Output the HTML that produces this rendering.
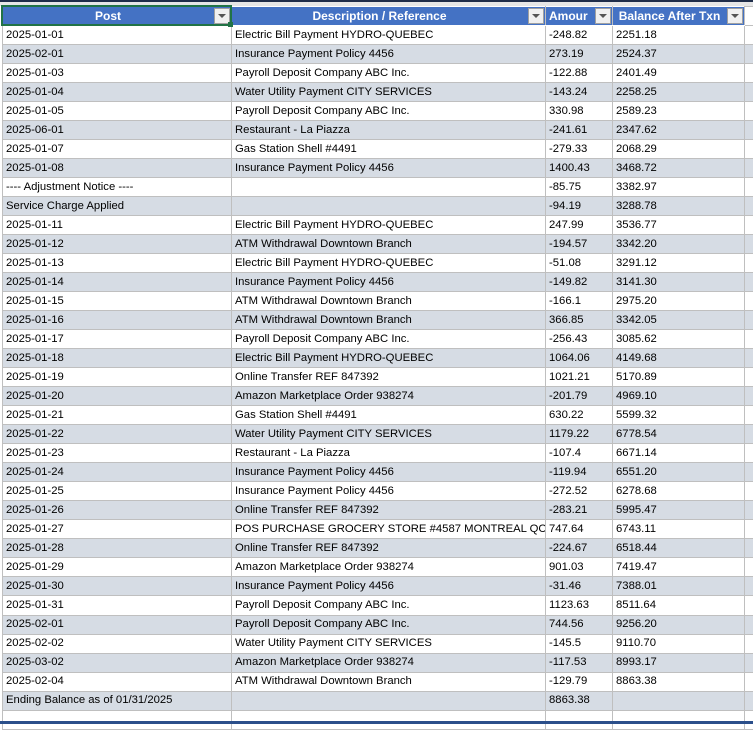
<!DOCTYPE html>
<html><head><style>
*{margin:0;padding:0;box-sizing:border-box}
body{width:753px;height:724px;overflow:hidden;background:#fff;font-family:"Liberation Sans",Arial,sans-serif;font-size:11.3px;position:relative}
.top{position:absolute;left:0;top:0;width:753px;height:6px;background:#e6e6e6;border-top:2px solid #1f2d4a}
table{position:absolute;left:2px;top:6px;border-collapse:collapse;table-layout:fixed;width:761px}
td{height:19.03px;border:1px solid #bfbfbf;padding:0 0 0 3px;white-space:nowrap;overflow:hidden;color:#000;line-height:17px}
tr:nth-child(odd) td{background:#d6dce4}
tr.h td{background:#4472c4;color:#fff;font-weight:bold;font-size:12px;text-align:center;position:relative;border-color:#fff #bfbfbf;padding:0 18px 0 0}
.dd{position:absolute;right:1px;top:1px;width:16px;height:16px;background:#f0f0f0;border:1px solid #a0a0a0}
.dd:after{content:"";position:absolute;left:3px;top:5px;border-left:4px solid transparent;border-right:4px solid transparent;border-top:4px solid #555}
.sel{position:absolute;left:1px;top:5px;width:231px;height:21px;border:2px solid #217346}
.selh{position:absolute;left:228px;top:22px;width:5px;height:5px;background:#217346}
.bot{position:absolute;left:0;top:721px;width:753px;height:3px;background:#2b4f8a}
</style></head><body>
<div class="top"></div>
<table>
<colgroup><col style="width:229px"><col style="width:314px"><col style="width:67px"><col style="width:132px"><col style="width:19px"></colgroup>
<tr class="h"><td>Post<span class="dd"></span></td><td>Description / Reference<span class="dd"></span></td><td style="text-align:left;padding-left:3px">Amour<span class="dd"></span></td><td>Balance After Txn<span class="dd"></span></td><td style="background:#fff;border-color:#bfbfbf"></td></tr>
<tr><td>2025-01-01</td><td>Electric Bill Payment HYDRO-QUEBEC</td><td>-248.82</td><td>2251.18</td><td></td></tr>
<tr><td>2025-02-01</td><td>Insurance Payment Policy 4456</td><td>273.19</td><td>2524.37</td><td></td></tr>
<tr><td>2025-01-03</td><td>Payroll Deposit Company ABC Inc.</td><td>-122.88</td><td>2401.49</td><td></td></tr>
<tr><td>2025-01-04</td><td>Water Utility Payment CITY SERVICES</td><td>-143.24</td><td>2258.25</td><td></td></tr>
<tr><td>2025-01-05</td><td>Payroll Deposit Company ABC Inc.</td><td>330.98</td><td>2589.23</td><td></td></tr>
<tr><td>2025-06-01</td><td>Restaurant - La Piazza</td><td>-241.61</td><td>2347.62</td><td></td></tr>
<tr><td>2025-01-07</td><td>Gas Station Shell #4491</td><td>-279.33</td><td>2068.29</td><td></td></tr>
<tr><td>2025-01-08</td><td>Insurance Payment Policy 4456</td><td>1400.43</td><td>3468.72</td><td></td></tr>
<tr><td>---- Adjustment Notice ----</td><td></td><td>-85.75</td><td>3382.97</td><td></td></tr>
<tr><td>Service Charge Applied</td><td></td><td>-94.19</td><td>3288.78</td><td></td></tr>
<tr><td>2025-01-11</td><td>Electric Bill Payment HYDRO-QUEBEC</td><td>247.99</td><td>3536.77</td><td></td></tr>
<tr><td>2025-01-12</td><td>ATM Withdrawal Downtown Branch</td><td>-194.57</td><td>3342.20</td><td></td></tr>
<tr><td>2025-01-13</td><td>Electric Bill Payment HYDRO-QUEBEC</td><td>-51.08</td><td>3291.12</td><td></td></tr>
<tr><td>2025-01-14</td><td>Insurance Payment Policy 4456</td><td>-149.82</td><td>3141.30</td><td></td></tr>
<tr><td>2025-01-15</td><td>ATM Withdrawal Downtown Branch</td><td>-166.1</td><td>2975.20</td><td></td></tr>
<tr><td>2025-01-16</td><td>ATM Withdrawal Downtown Branch</td><td>366.85</td><td>3342.05</td><td></td></tr>
<tr><td>2025-01-17</td><td>Payroll Deposit Company ABC Inc.</td><td>-256.43</td><td>3085.62</td><td></td></tr>
<tr><td>2025-01-18</td><td>Electric Bill Payment HYDRO-QUEBEC</td><td>1064.06</td><td>4149.68</td><td></td></tr>
<tr><td>2025-01-19</td><td>Online Transfer REF 847392</td><td>1021.21</td><td>5170.89</td><td></td></tr>
<tr><td>2025-01-20</td><td>Amazon Marketplace Order 938274</td><td>-201.79</td><td>4969.10</td><td></td></tr>
<tr><td>2025-01-21</td><td>Gas Station Shell #4491</td><td>630.22</td><td>5599.32</td><td></td></tr>
<tr><td>2025-01-22</td><td>Water Utility Payment CITY SERVICES</td><td>1179.22</td><td>6778.54</td><td></td></tr>
<tr><td>2025-01-23</td><td>Restaurant - La Piazza</td><td>-107.4</td><td>6671.14</td><td></td></tr>
<tr><td>2025-01-24</td><td>Insurance Payment Policy 4456</td><td>-119.94</td><td>6551.20</td><td></td></tr>
<tr><td>2025-01-25</td><td>Insurance Payment Policy 4456</td><td>-272.52</td><td>6278.68</td><td></td></tr>
<tr><td>2025-01-26</td><td>Online Transfer REF 847392</td><td>-283.21</td><td>5995.47</td><td></td></tr>
<tr><td>2025-01-27</td><td>POS PURCHASE GROCERY STORE #4587 MONTREAL QC</td><td>747.64</td><td>6743.11</td><td></td></tr>
<tr><td>2025-01-28</td><td>Online Transfer REF 847392</td><td>-224.67</td><td>6518.44</td><td></td></tr>
<tr><td>2025-01-29</td><td>Amazon Marketplace Order 938274</td><td>901.03</td><td>7419.47</td><td></td></tr>
<tr><td>2025-01-30</td><td>Insurance Payment Policy 4456</td><td>-31.46</td><td>7388.01</td><td></td></tr>
<tr><td>2025-01-31</td><td>Payroll Deposit Company ABC Inc.</td><td>1123.63</td><td>8511.64</td><td></td></tr>
<tr><td>2025-02-01</td><td>Payroll Deposit Company ABC Inc.</td><td>744.56</td><td>9256.20</td><td></td></tr>
<tr><td>2025-02-02</td><td>Water Utility Payment CITY SERVICES</td><td>-145.5</td><td>9110.70</td><td></td></tr>
<tr><td>2025-03-02</td><td>Amazon Marketplace Order 938274</td><td>-117.53</td><td>8993.17</td><td></td></tr>
<tr><td>2025-02-04</td><td>ATM Withdrawal Downtown Branch</td><td>-129.79</td><td>8863.38</td><td></td></tr>
<tr><td>Ending Balance as of 01/31/2025</td><td></td><td>8863.38</td><td></td><td></td></tr>
<tr><td style="background:#fff"></td><td style="background:#fff"></td><td style="background:#fff"></td><td style="background:#fff"></td><td style="background:#fff"></td></tr>
</table>
<div class="sel"></div><div class="selh"></div>
<div class="bot"></div>
</body></html>
